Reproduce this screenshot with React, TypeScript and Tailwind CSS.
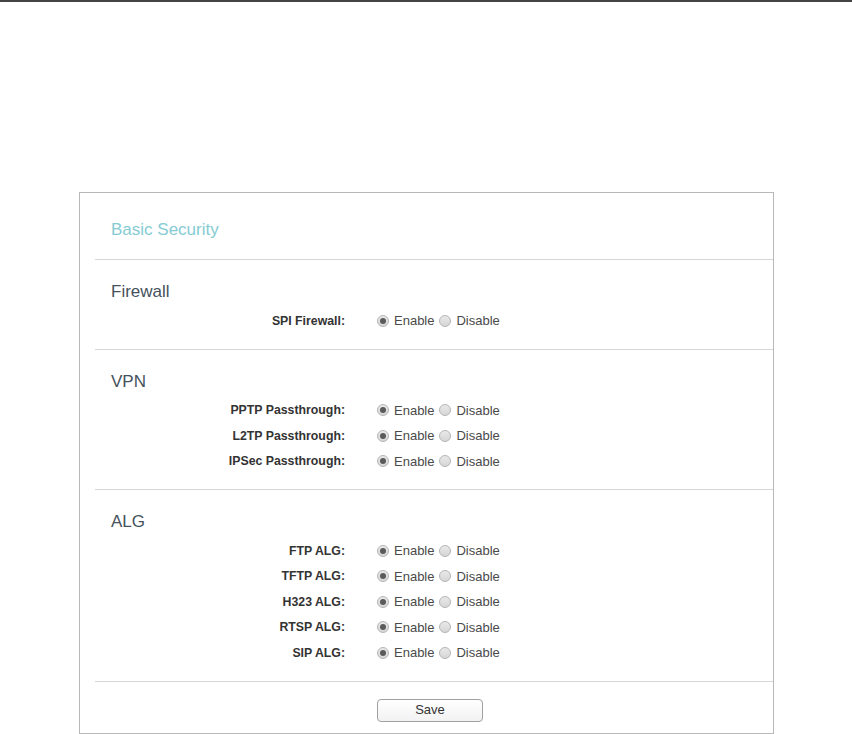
import React from "react";

function Radio({ checked }: { checked: boolean }) {
  return (
    <span className="relative inline-flex h-[12px] w-[12px] shrink-0 items-center justify-center rounded-full border border-[#b5b5b5] bg-gradient-to-b from-[#e9e9e9] to-[#d6d6d6]">
      {checked && <span className="h-[6px] w-[6px] rounded-full bg-[#5a5a5a]" />}
    </span>
  );
}

function Row({ label }: { label: string }) {
  return (
    <div className="flex h-[25.5px] items-center">
      <div className="w-[250px] text-right text-[12.3px] font-bold text-[#333]">{label}</div>
      <div className="ml-[32px] flex items-center text-[13px] text-[#4a4a4a]">
        <Radio checked />
        <span className="ml-[5px]">Enable</span>
        <span className="ml-[5px] flex items-center">
          <Radio checked={false} />
        </span>
        <span className="ml-[5px]">Disable</span>
      </div>
    </div>
  );
}

function Section({ title, rows }: { title: string; rows: string[] }) {
  return (
    <div className="ml-[15px] border-t border-[#d6d6d6] pt-[21px] pb-[15px]">
      <div className="h-[22px] pl-[16px] text-[17px] leading-[22px] text-[#45525c]">{title}</div>
      <div className="mt-[5px]">
        {rows.map((r) => (
          <Row key={r} label={r} />
        ))}
      </div>
    </div>
  );
}

export default function App() {
  return (
    <div className="min-h-[734px] bg-white" style={{ fontFamily: '"Liberation Sans", Arial, sans-serif' }}>
      <div className="h-[2px] bg-[#444]" />
      <div className="ml-[79px] mt-[190px] w-[695px] border border-[#b8b8b8]">
        <div className="pl-[31px] pt-[26px] pb-[18px] text-[17px] leading-[22px] text-[#86cbd3]">Basic Security</div>
        <Section title="Firewall" rows={["SPI Firewall:"]} />
        <Section title="VPN" rows={["PPTP Passthrough:", "L2TP Passthrough:", "IPSec Passthrough:"]} />
        <Section title="ALG" rows={["FTP ALG:", "TFTP ALG:", "H323 ALG:", "RTSP ALG:", "SIP ALG:"]} />
        <div className="ml-[15px] flex justify-center border-t border-[#d6d6d6] pt-[17px] pb-[11px] pr-[8px]">
          <button className="h-[23px] w-[106px] rounded-[4px] border border-[#a0a0a0] bg-gradient-to-b from-white to-[#f2f2f2] text-[13px] text-[#333]">
            Save
          </button>
        </div>
      </div>
    </div>
  );
}
